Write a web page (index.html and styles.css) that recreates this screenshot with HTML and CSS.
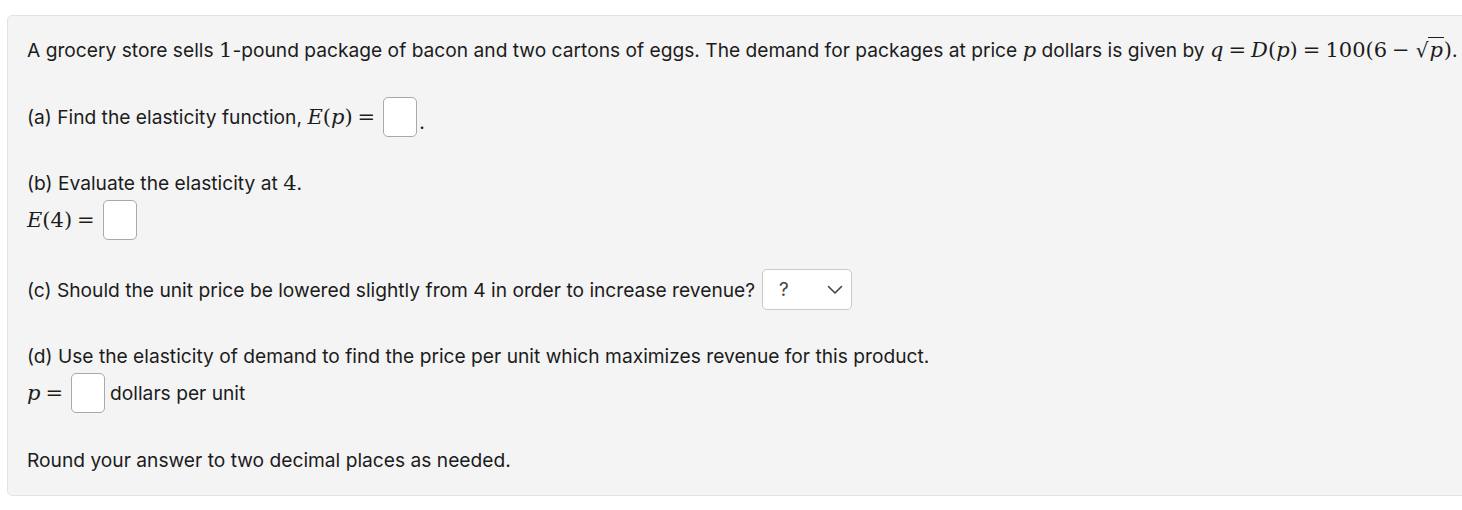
FILE: index.html
```html
<!DOCTYPE html>
<html>
<head>
<meta charset="utf-8">
<link rel="stylesheet" href="styles.css">
</head>
<body>
<div class="card">
  <div class="row r1"><span>A grocery store sells <span class="m">1</span>-pound package of bacon and two cartons of eggs. The demand for packages at price <span class="m i">p</span> dollars is given by <span class="m"><span class="i">q</span><span class="op">=</span><span class="i">D</span>(<span class="i">p</span>)<span class="op">=</span>100(6<span class="op">−</span><span class="sq">√</span><span class="ov i">p</span>)</span>.</span></div>

  <div class="row r40 sec"><span>(a) Find the elasticity function, <span class="m"><span class="i">E</span>(<span class="i">p</span>)<span class="op">=</span></span></span><span class="box"></span><span class="dot">.</span></div>

  <div class="sec">
    <div class="row r34"><span>(b) Evaluate the elasticity at <span class="m">4</span>.</span></div>
    <div class="row r40"><span class="m"><span class="i">E</span>(4)<span class="op">=</span></span><span class="box"></span></div>
  </div>

  <div class="row r41 sec"><span>(c) Should the unit price be lowered slightly from 4 in order to increase revenue?</span><span class="select"><span class="q">?</span><svg width="16" height="10" viewBox="0 0 16 10"><path d="M1.5 1.5 L8 8 L14.5 1.5" fill="none" stroke="#444" stroke-width="1.6" stroke-linecap="round" stroke-linejoin="round"/></svg></span></div>

  <div class="sec">
    <div class="row r34"><span>(d) Use the elasticity of demand to find the price per unit which maximizes revenue for this product.</span></div>
    <div class="row r40"><span class="m"><span class="i">p</span><span class="op">=</span></span><span class="box"></span><span class="unit">dollars per unit</span></div>
  </div>

  <div class="row r36 sec"><span>Round your answer to two decimal places as needed.</span></div>
</div>
</body>
</html>
```

FILE: styles.css
```css
html, body {
  margin: 0;
  padding: 0;
  background: #ffffff;
}
body {
  font-family: Inter, "Noto Sans", sans-serif;
  font-size: 19.2px;
  color: #1c1c1c;
}
.card {
  margin: 15px 0 0 7px;
  width: 1470px;
  box-sizing: border-box;
  background: #f4f4f4;
  border: 1px solid #e3e3e3;
  border-radius: 5px;
  padding: 16px 19px 17px 19px;
}
.row {
  display: flex;
  align-items: center;
  white-space: nowrap;
  height: 36px;
}
.r34 { height: 34px; }
.r40 { height: 40px; }
.r41 { height: 41px; }
.r36 { height: 36px; }
.sec { margin-top: 29px; }
.m {
  font-family: "DejaVu Serif", "Liberation Serif", serif;
  font-size: 21px;
}
.i { font-style: italic; }
.op { margin: 0 5px; }
.sq { font-style: normal; font-size: 20px; margin-left: 1px; }
.ov {
  border-top: 1.3px solid #1c1c1c;
  padding: 0 1px;
  line-height: 1.0;
}
.box {
  display: inline-block;
  width: 32px;
  height: 38px;
  background: #fff;
  border: 1px solid #a9a9a9;
  border-radius: 5px;
  margin-left: 3px;
}
.dot { margin-left: 2px; align-self: center; margin-top: 10px; }
.unit { margin-left: 5px; }
.select {
  display: inline-flex;
  align-items: center;
  justify-content: space-between;
  box-sizing: border-box;
  width: 90px;
  height: 41px;
  margin-left: 7px;
  background: #fff;
  border: 1px solid #c9c9c9;
  border-radius: 5px;
  padding: 0 8px 0 16px;
  color: #444;
}
.q { font-size: 19px; }
```
